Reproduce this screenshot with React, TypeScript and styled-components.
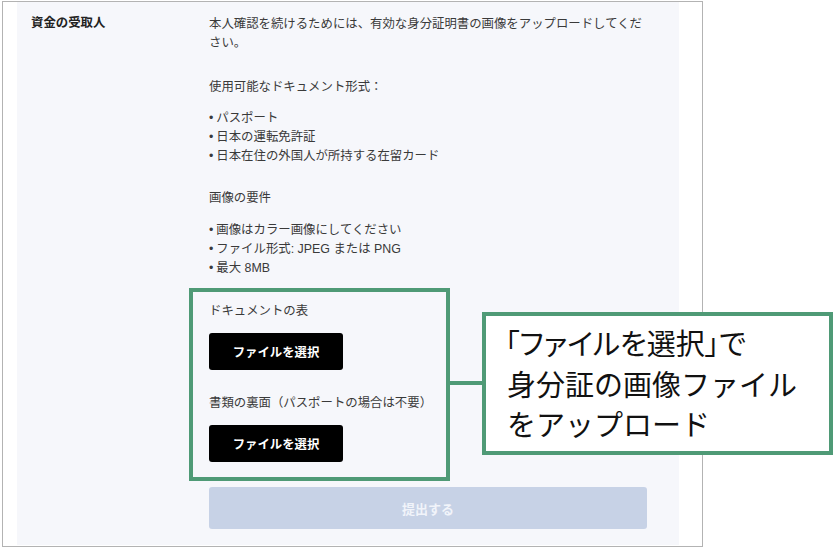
import React from 'react';
import styled, { createGlobalStyle } from 'styled-components';

const GlobalStyle = createGlobalStyle`
  html, body {
    margin: 0;
    padding: 0;
    background: #ffffff;
  }
  body {
    font-family: "Liberation Sans", "Noto Sans CJK JP", sans-serif;
    color: #333333;
  }
  * {
    box-sizing: border-box;
  }
`;

const annotationGreen = '#4f9a76';

const Page = styled.div`
  position: relative;
  width: 835px;
  height: 548px;
  overflow: hidden;
`;

const Frame = styled.div`
  margin: 1px 0 0 2px;
  width: 701px;
  height: 546px;
  border: 1px solid #b3b3b3;
  padding: 0 23px 1px 14px;
  display: flex;
`;

const Panel = styled.div`
  flex: 1;
  background: #f6f7fb;
  display: grid;
  grid-template-columns: 178px 438px;
  padding: 13px 0 0 14px;
  font-size: 12.4px;
  line-height: 19px;
`;

const FieldLabel = styled.div`
  font-weight: 700;
  color: #222222;
  margin-top: -1px;
`;

const FieldBody = styled.div`
  display: flex;
  flex-direction: column;
`;

const Paragraph = styled.p<{ $gap?: number }>`
  margin: ${p => p.$gap ?? 0}px 0 0;
  color: #3a3a3a;
`;

const BulletList = styled.ul<{ $gap: number }>`
  list-style: none;
  margin: ${p => p.$gap}px 0 0;
  padding: 0;
  color: #3a3a3a;
`;

const BulletItem = styled.li`
  &::before {
    content: '•';
    margin-right: 3px;
  }
`;

const HighlightBox = styled.div`
  margin: 10px 0 0 -20px;
  width: 261px;
  border: 4px solid ${annotationGreen};
  padding: 10px 16px 15px;
  display: flex;
  flex-direction: column;
`;

const UploadLabel = styled.div<{ $gap?: number }>`
  margin-top: ${p => p.$gap ?? 0}px;
  color: #3a3a3a;
`;

const FileButton = styled.button`
  margin-top: 12px;
  width: 134px;
  height: 37px;
  border: none;
  border-radius: 3px;
  background: #000000;
  color: #ffffff;
  font-family: inherit;
  font-size: 12.4px;
  font-weight: 700;
  cursor: pointer;
`;

const SubmitButton = styled.button`
  margin-top: 6px;
  width: 438px;
  height: 42px;
  border: none;
  border-radius: 3px;
  background: #c7d2e6;
  color: #f1f4fa;
  font-family: inherit;
  font-size: 13px;
  font-weight: 700;
`;

const Connector = styled.div`
  position: absolute;
  left: 450px;
  top: 381px;
  width: 33px;
  height: 4px;
  background: ${annotationGreen};
`;

const Callout = styled.div`
  position: absolute;
  left: 482px;
  top: 312px;
  width: 351px;
  height: 143px;
  background: #ffffff;
  border: 4px solid ${annotationGreen};
  padding: 6px 0 0 21px;
  font-family: "Noto Sans CJK JP", sans-serif;
  font-size: 29px;
  line-height: 40.5px;
  color: #111111;
  white-space: nowrap;
`;

const CalloutLine = styled.div<{ $proportional?: boolean }>`
  font-feature-settings: ${p => (p.$proportional ? '"palt"' : 'normal')};
  margin-left: ${p => (p.$proportional ? '-2px' : '0')};
`;

const App: React.FC = () => {
  return (
    <>
      <GlobalStyle />
      <Page>
        <Frame>
          <Panel>
            <FieldLabel>資金の受取人</FieldLabel>
            <FieldBody>
              <Paragraph>
                本人確認を続けるためには、有効な身分証明書の画像をアップロードしてください。
              </Paragraph>
              <Paragraph $gap={25}>使用可能なドキュメント形式：</Paragraph>
              <BulletList $gap={12}>
                <BulletItem>パスポート</BulletItem>
                <BulletItem>日本の運転免許証</BulletItem>
                <BulletItem>日本在住の外国人が所持する在留カード</BulletItem>
              </BulletList>
              <Paragraph $gap={23}>画像の要件</Paragraph>
              <BulletList $gap={13}>
                <BulletItem>画像はカラー画像にしてください</BulletItem>
                <BulletItem>ファイル形式: JPEG または PNG</BulletItem>
                <BulletItem>最大 8MB</BulletItem>
              </BulletList>

              <HighlightBox>
                <UploadLabel>ドキュメントの表</UploadLabel>
                <FileButton>ファイルを選択</FileButton>
                <UploadLabel $gap={24}>書類の裏面（パスポートの場合は不要）</UploadLabel>
                <FileButton>ファイルを選択</FileButton>
              </HighlightBox>

              <SubmitButton disabled>提出する</SubmitButton>
            </FieldBody>
          </Panel>
        </Frame>

        <Connector />
        <Callout>
          <CalloutLine $proportional>「ファイルを選択」で</CalloutLine>
          <CalloutLine>身分証の画像ファイル</CalloutLine>
          <CalloutLine>をアップロード</CalloutLine>
        </Callout>
      </Page>
    </>
  );
};

export default App;
